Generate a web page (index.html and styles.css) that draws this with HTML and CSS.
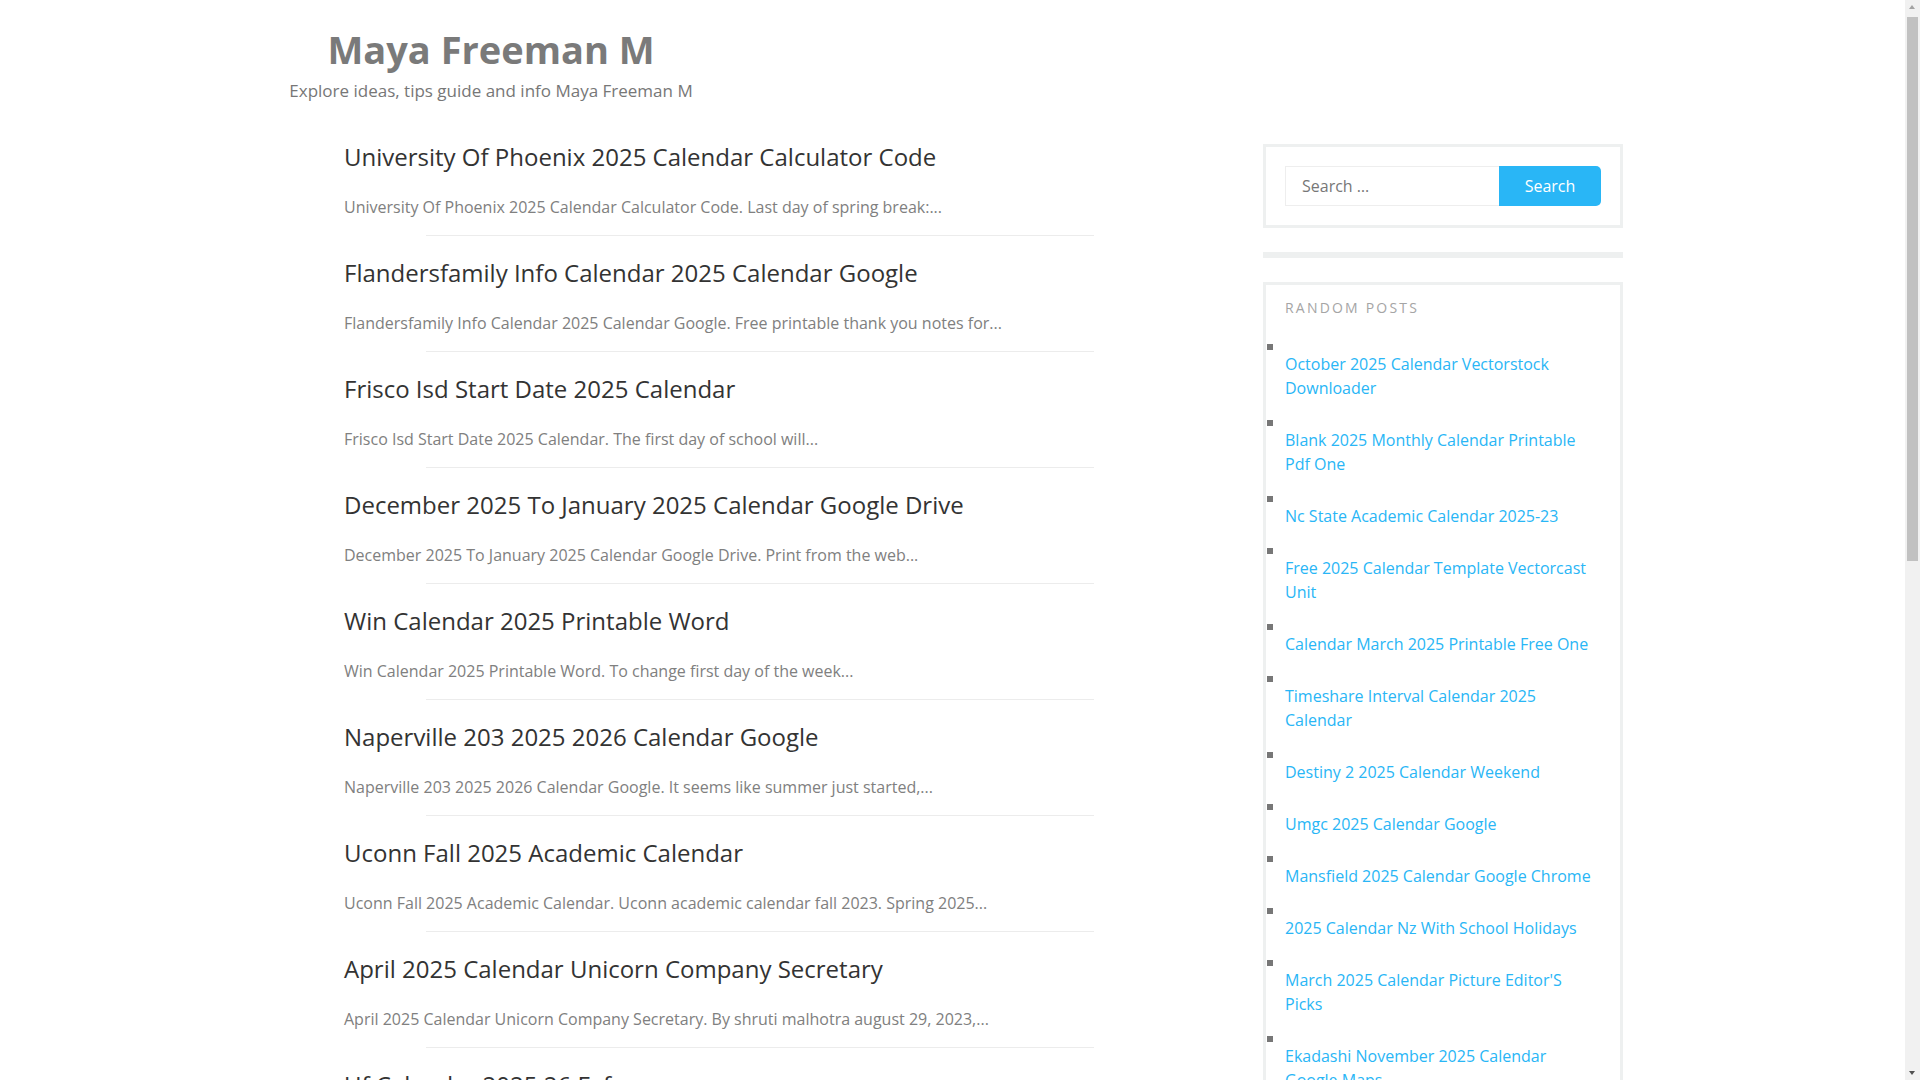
FILE: index.html
```html
<!DOCTYPE html>
<html lang="en">
<head>
<meta charset="utf-8">
<title>Maya Freeman M</title>
<link rel="stylesheet" href="styles.css">
</head>
<body>
<header class="site-header">
  <div class="container">
    <div class="branding">
      <h1 class="site-title">Maya Freeman M</h1>
      <p class="site-desc">Explore ideas, tips guide and info Maya Freeman M</p>
    </div>
  </div>
</header>
<div class="container content">
  <main class="main">
    <article class="post">
      <h2 class="post-title">University Of Phoenix 2025 Calendar Calculator Code</h2>
      <p class="post-excerpt">University Of Phoenix 2025 Calendar Calculator Code. Last day of spring break:...</p>
    </article>
    <article class="post">
      <h2 class="post-title">Flandersfamily Info Calendar 2025 Calendar Google</h2>
      <p class="post-excerpt">Flandersfamily Info Calendar 2025 Calendar Google. Free printable thank you notes for...</p>
    </article>
    <article class="post">
      <h2 class="post-title">Frisco Isd Start Date 2025 Calendar</h2>
      <p class="post-excerpt">Frisco Isd Start Date 2025 Calendar. The first day of school will...</p>
    </article>
    <article class="post">
      <h2 class="post-title">December 2025 To January 2025 Calendar Google Drive</h2>
      <p class="post-excerpt">December 2025 To January 2025 Calendar Google Drive. Print from the web...</p>
    </article>
    <article class="post">
      <h2 class="post-title">Win Calendar 2025 Printable Word</h2>
      <p class="post-excerpt">Win Calendar 2025 Printable Word. To change first day of the week...</p>
    </article>
    <article class="post">
      <h2 class="post-title">Naperville 203 2025 2026 Calendar Google</h2>
      <p class="post-excerpt">Naperville 203 2025 2026 Calendar Google. It seems like summer just started,...</p>
    </article>
    <article class="post">
      <h2 class="post-title">Uconn Fall 2025 Academic Calendar</h2>
      <p class="post-excerpt">Uconn Fall 2025 Academic Calendar. Uconn academic calendar fall 2023. Spring 2025...</p>
    </article>
    <article class="post">
      <h2 class="post-title">April 2025 Calendar Unicorn Company Secretary</h2>
      <p class="post-excerpt">April 2025 Calendar Unicorn Company Secretary. By shruti malhotra august 29, 2023,...</p>
    </article>
    <article class="post">
      <h2 class="post-title">Uf Calendar 2025 26 Fafsa</h2>
      <p class="post-excerpt">Uf Calendar 2025 26 Fafsa. The academic calendar lists important dates...</p>
    </article>
  </main>
  <aside class="sidebar">
    <section class="widget widget-search">
      <form class="search-form">
        <input class="search-field" type="search" placeholder="Search …">
        <button class="search-submit" type="button">Search</button>
      </form>
    </section>
    <section class="widget widget-empty"></section>
    <section class="widget widget-posts">
      <h3 class="widget-title">Random Posts</h3>
      <ul class="post-list">
        <li><a href="#">October 2025 Calendar Vectorstock Downloader</a></li>
        <li><a href="#">Blank 2025 Monthly Calendar Printable Pdf One</a></li>
        <li><a href="#">Nc State Academic Calendar 2025-23</a></li>
        <li><a href="#">Free 2025 Calendar Template Vectorcast Unit</a></li>
        <li><a href="#">Calendar March 2025 Printable Free One</a></li>
        <li><a href="#">Timeshare Interval Calendar 2025 Calendar</a></li>
        <li><a href="#">Destiny 2 2025 Calendar Weekend</a></li>
        <li><a href="#">Umgc 2025 Calendar Google</a></li>
        <li><a href="#">Mansfield 2025 Calendar Google Chrome</a></li>
        <li><a href="#">2025 Calendar Nz With School Holidays</a></li>
        <li><a href="#">March 2025 Calendar Picture Editor'S Picks</a></li>
        <li><a href="#">Ekadashi November 2025 Calendar Google Maps</a></li>
      </ul>
    </section>
  </aside>
</div>
<div class="fake-scrollbar" aria-hidden="true">
  <div class="sb-up"></div>
  <div class="sb-thumb"></div>
  <div class="sb-down"></div>
</div>
</body>
</html>
```
FILE: styles.css
```css
html, body {
  margin: 0;
  padding: 0;
}
body {
  background: #ffffff;
  font-family: "Open Sans", "Liberation Sans", sans-serif;
  color: #777777;
  margin-right: 15px;
}
.container {
  width: 1341px;
  margin: 0 auto;
}
.site-header {
  padding-top: 24px;
}
.branding {
  width: 418px;
  text-align: center;
}
.site-title {
  margin: 0;
  font-size: 38px;
  line-height: 50px;
  font-weight: 700;
  color: #7a7a7a;
}
.site-desc {
  margin: 5px 0 0;
  font-size: 17px;
  line-height: 24px;
  color: #777777;
}
.content {
  display: flex;
  justify-content: space-between;
  align-items: flex-start;
  margin-top: 17px;
}
.main {
  width: 812px;
  padding-left: 62px;
  box-sizing: border-box;
}
.post {
  padding: 19px 0 0;
}
.post::after {
  content: "";
  display: block;
  margin: 14px 0 0 82px;
  height: 1px;
  background: #ececec;
}
.post-title {
  margin: 0 0 18px;
  font-size: 24px;
  line-height: 36px;
  font-weight: 400;
  color: #333333;
}
.post-excerpt {
  margin: 0;
  font-size: 16px;
  line-height: 28px;
  color: #808080;
}
.sidebar {
  width: 360px;
  margin-top: 24px;
}
.widget {
  border: 3px solid #eef0f0;
  margin-bottom: 24px;
}
.widget-search {
  padding: 19px;
}
.search-form {
  display: flex;
}
.search-field {
  flex: 1;
  min-width: 0;
  height: 40px;
  box-sizing: border-box;
  border: 1px solid #eeeeee;
  border-right: none;
  padding: 0 0 0 16px;
  font-family: "Open Sans", sans-serif;
  font-size: 16px;
  color: #777777;
  outline: none;
}
.search-field::placeholder {
  color: #777777;
}
.search-submit {
  width: 102px;
  height: 40px;
  border: none;
  border-radius: 0 5px 5px 0;
  background: #29b6f6;
  color: #ffffff;
  font-family: "Open Sans", sans-serif;
  font-size: 16px;
  padding: 0;
}
.widget-empty {
  height: 0;
}
.widget-posts {
  padding: 13px 19px 10px;
}
.widget-title {
  margin: 0 0 16px;
  font-size: 14px;
  line-height: 20px;
  font-weight: 400;
  letter-spacing: 2.2px;
  text-transform: uppercase;
  color: #a5a5a5;
}
.post-list {
  list-style: none;
  margin: 0;
  padding: 0;
}
.post-list li {
  position: relative;
  padding-top: 18px;
  margin-bottom: 10px;
  font-size: 16px;
  line-height: 24px;
}
.post-list li::before {
  content: "";
  position: absolute;
  left: -18px;
  top: 10px;
  width: 6px;
  height: 6px;
  background: #777777;
}
.post-list a {
  color: #29b6f6;
  text-decoration: none;
}
.fake-scrollbar {
  position: fixed;
  top: 0;
  right: 0;
  width: 15px;
  height: 100vh;
  background: #f1f1f1;
}
.sb-thumb {
  position: absolute;
  top: 17px;
  left: 2px;
  width: 11px;
  height: 544px;
  background: #c1c1c1;
}
.sb-up,
.sb-down {
  position: absolute;
  left: 4px;
  width: 0;
  height: 0;
  border-left: 3.5px solid transparent;
  border-right: 3.5px solid transparent;
}
.sb-up {
  top: 5px;
  border-bottom: 4px solid #a3a3a3;
}
.sb-down {
  bottom: 5px;
  border-top: 4px solid #505050;
}
```
